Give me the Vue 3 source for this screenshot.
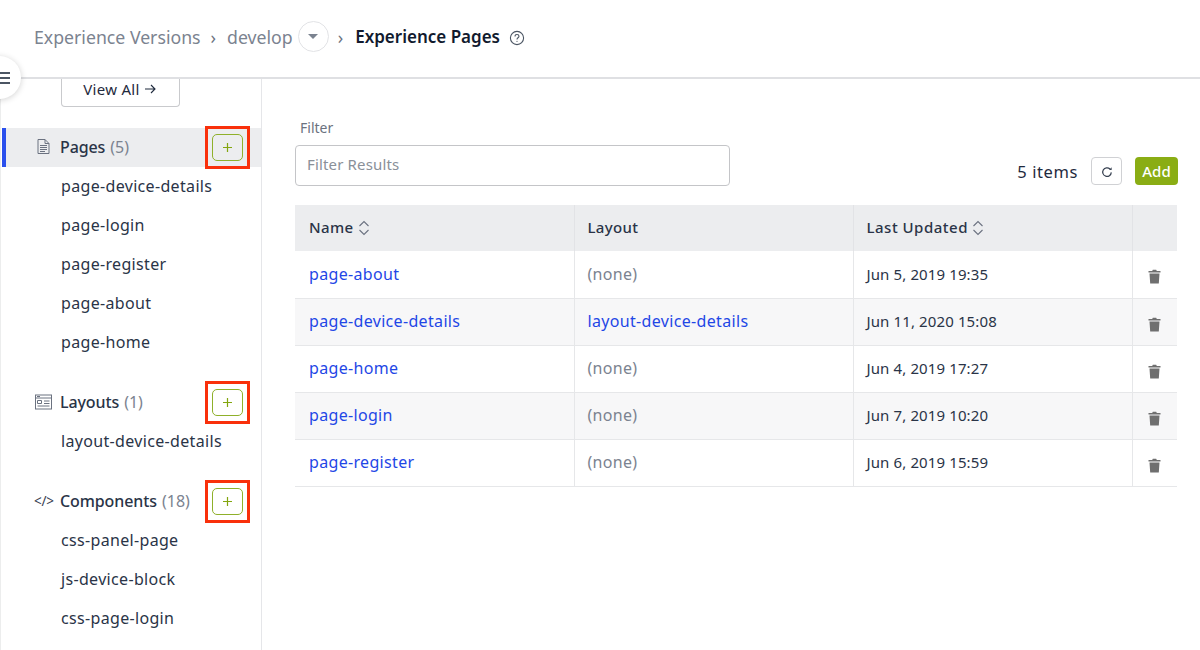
<script setup>
const groups = [
  { name: 'Pages', count: 5, icon: 'page', active: true, items: ['page-device-details', 'page-login', 'page-register', 'page-about', 'page-home'] },
  { name: 'Layouts', count: 1, icon: 'layout', items: ['layout-device-details'] },
  { name: 'Components', count: 18, icon: 'code', items: ['css-panel-page', 'js-device-block', 'css-page-login'] },
]
const rows = [
  { name: 'page-about', layout: '(none)', updated: 'Jun 5, 2019 19:35' },
  { name: 'page-device-details', layout: 'layout-device-details', updated: 'Jun 11, 2020 15:08' },
  { name: 'page-home', layout: '(none)', updated: 'Jun 4, 2019 17:27' },
  { name: 'page-login', layout: '(none)', updated: 'Jun 7, 2019 10:20' },
  { name: 'page-register', layout: '(none)', updated: 'Jun 6, 2019 15:59' },
]
</script>

<template>
  <div class="page">
    <header class="topbar">
      <span class="crumb">Experience Versions</span>
      <span class="sep">›</span>
      <span class="crumb">develop</span>
      <span class="caret-btn"><i class="caret"></i></span>
      <span class="sep dark">›</span>
      <strong class="current">Experience Pages</strong>
      <svg class="help" width="16" height="16" viewBox="0 0 16 16" fill="none" stroke="#4b5563" stroke-width="1.1">
        <circle cx="8" cy="8" r="6.6" />
        <path d="M6 6.4c0-1.2.9-1.9 2-1.9s2 .7 2 1.800c0 1.500-2 1.500-2 3.100" />
        <circle cx="8" cy="11.300" r=".6" fill="#4b5563" stroke="none" />
      </svg>
    </header>

    <button class="menu-btn" aria-label="menu">
      <i></i><i></i><i></i>
    </button>

    <div class="body">
      <aside class="sidebar">
        <button class="view-all">
          View All
          <svg width="11" height="10" viewBox="0 0 11 10" fill="none" stroke="#1f2a3d" stroke-width="1.100"><path d="M0 5h10M6 1l4 4-4 4" /></svg>
        </button>
        <section v-for="g in groups" :key="g.name" class="group">
          <div class="group-head" :class="{ active: g.active }">
            <span class="group-icon">
              <svg v-if="g.icon === 'page'" class="page-icon" width="13" height="15" viewBox="0 0 13 15" fill="none" stroke="#6b7280" stroke-width="1">
                <path d="M1 .5h7l4 4v10H1z" />
                <path d="M8 .5v4h4M3 6.500h7M3 8.500h7M3 10.500h7M3 12.500h5" />
              </svg>
              <svg v-else-if="g.icon === 'layout'" width="17" height="16" viewBox="0 0 17 16" fill="none" stroke="#6b7280" stroke-width="1">
                <rect x=".5" y="1" width="16" height="14" />
                <path d="M.5 4h16M2 2.500h3M2.500 6.500h4v3h-4zM9 7h5.500M9 9.500h5.500M2.500 12h12" />
              </svg>
              <span v-else class="code-icon">&lt;/&gt;</span>
            </span>
            <span class="group-name">{{ g.name }}</span>
            <span class="group-count">({{ g.count }})</span>
            <span class="add-mark">
              <span class="add-small">
                <svg width="9" height="9" viewBox="0 0 9 9" stroke="#83a60f" stroke-width="1.200"><path d="M4.500 0v9M0 4.500h9" /></svg>
              </span>
            </span>
          </div>
          <a v-for="item in g.items" :key="item" class="side-item">{{ item }}</a>
        </section>
      </aside>

      <main class="content">
        <div class="toolbar">
          <label class="filter">
            <span class="filter-label">Filter</span>
            <input class="filter-input" placeholder="Filter Results" />
          </label>
          <div class="toolbar-right">
            <span class="items">5 items</span>
            <button class="refresh" aria-label="refresh">
              <svg width="12" height="12" viewBox="0 0 12 12" fill="none" stroke="#374151" stroke-width="1.200">
                <path d="M10.300 6.400a4.300 4.300 0 1 1-1.300-3.400" />
                <path d="M10.600 1.300v2.600H8" fill="#374151" stroke="none" />
              </svg>
            </button>
            <button class="add">Add</button>
          </div>
        </div>

        <table class="table">
          <thead>
            <tr>
              <th class="c1">Name <svg class="sort" width="12" height="18" viewBox="0 0 12 18" fill="none" stroke="#6b7280" stroke-width="1.100"><path d="M1.500 7l4.500-4.500L10.500 7M1.500 11l4.500 4.500 4.500-4.500" /></svg></th>
              <th class="c2">Layout</th>
              <th class="c3">Last Updated <svg class="sort" width="12" height="18" viewBox="0 0 12 18" fill="none" stroke="#6b7280" stroke-width="1.100"><path d="M1.500 7l4.500-4.500L10.500 7M1.500 11l4.500 4.500 4.500-4.500" /></svg></th>
              <th class="c4"></th>
            </tr>
          </thead>
          <tbody>
            <tr v-for="r in rows" :key="r.name">
              <td><a class="link">{{ r.name }}</a></td>
              <td>
                <span v-if="r.layout === '(none)'" class="none">(none)</span>
                <a v-else class="link">{{ r.layout }}</a>
              </td>
              <td class="date">{{ r.updated }}</td>
              <td class="trash-cell">
                <svg width="13" height="15" viewBox="0 0 13 15" fill="#6f6f6f">
                  <path d="M.5 2h3.700l.6-1.200h3.400L8.800 2h3.700v1.500H.5zM1.500 4.500h10l-.7 10H2.200z" />
                </svg>
              </td>
            </tr>
          </tbody>
        </table>
      </main>
    </div>
  </div>
</template>

<style>
html, body { margin: 0; background: #fff; overflow: hidden; }
</style>

<style scoped>
.page {
  position: relative;
  width: 1200px;
  height: 650px;
  overflow: hidden;
  font-family: "Noto Sans", "Open Sans", sans-serif;
  color: #1f2a3d;
  font-size: 16px;
}
.topbar {
  height: 79px;
  box-sizing: border-box;
  border-bottom: 2px solid #dfe0e3;
  display: flex;
  align-items: center;
  padding: 0 0 4px 34px;
  font-size: 17.700px;
}
.crumb { color: #7b8390; }
.sep { color: #6b7280; margin: 0 11px 0 10px; }
.sep.dark { margin: 0 12px 0 9px; }
.caret-btn {
  width: 31px;
  height: 31px;
  box-sizing: border-box;
  border: 1px solid #e2e3e6;
  border-radius: 50%;
  margin-left: 5px;
  display: flex;
  align-items: center;
  justify-content: center;
}
.caret {
  width: 0;
  height: 0;
  border-left: 5px solid transparent;
  border-right: 5px solid transparent;
  border-top: 5px solid #7b8390;
}
.current { color: #111a2e; font-weight: 600; font-size: 17px; }
.help { margin-left: 9px; margin-top: 2px; }
.menu-btn {
  position: absolute;
  left: -22px;
  top: 56px;
  width: 43px;
  height: 43px;
  border: 0;
  border-radius: 50%;
  background: #fff;
  box-shadow: 0 1px 6px rgba(0, 0, 0, .18);
  display: flex;
  flex-direction: column;
  align-items: flex-end;
  justify-content: center;
  gap: 3px;
  padding: 0 11px 0 0;
  z-index: 2;
}
.menu-btn i { display: block; width: 11px; height: 2px; background: #4b5563; }
.body { display: flex; height: 571px; }
.sidebar {
  width: 262px;
  box-sizing: border-box;
  border-right: 1px solid #e5e6e9;
  border-left: 1px solid #eceded;
  flex: none;
  overflow: hidden;
}
.view-all {
  display: flex;
  align-items: center;
  justify-content: center;
  gap: 5px;
  margin-left: 60px;
  width: 119px;
  height: 28px;
  box-sizing: border-box;
  border: 1px solid #c9cacd;
  border-top: 0;
  border-radius: 0 0 4px 4px;
  background: #fff;
  font: 15px "Noto Sans", sans-serif;
  letter-spacing: .3px;
  color: #1f2a3d;
  padding: 0 2px 7px 0;
}
.group { margin-bottom: 21px; }
.group:first-of-type { margin-top: 21px; }
.group-head {
  position: relative;
  height: 39px;
  display: flex;
  align-items: center;
  padding-left: 29px;
  margin-left: 1px;
  gap: 5px;
  border-left: 4px solid transparent;
}
.group-head.active { background: #ecedef; border-left-color: #2b50ed; }
.group-icon { width: 20px; display: flex; justify-content: flex-start; flex: none; margin-bottom: 2px; }
.page-icon { margin-left: 2px; }
.group-name { font-weight: 500; color: #2a3447; letter-spacing: -.1px; margin-bottom: 2px; }
.group-count { color: #7b8390; margin-bottom: 2px; }
.code-icon { font-size: 13.500px; color: #374151; margin-left: -1px; letter-spacing: -.3px; }
.add-mark {
  position: absolute;
  left: 199px;
  top: -2px;
  width: 45px;
  height: 43px;
  box-sizing: border-box;
  border: 3px solid #f9300b;
  display: flex;
  align-items: center;
  justify-content: center;
}
.add-small {
  width: 31px;
  height: 27px;
  box-sizing: border-box;
  border: 1px solid #8fb02a;
  border-radius: 5px;
  margin-right: 1px;
  display: flex;
  align-items: center;
  justify-content: center;
}
.side-item {
  display: block;
  height: 39px;
  line-height: 39px;
  padding-left: 60px;
  font-size: 16px;
  letter-spacing: .33px;
  color: #2a3447;
}
.content { flex: 1; padding: 40px 22px 0 33px; min-width: 0; }
.toolbar { display: flex; justify-content: space-between; align-items: flex-end; }
.filter { display: block; }
.filter-label { display: block; font-size: 14px; color: #6b7280; padding-left: 5px; margin-bottom: 8px; line-height: 18px; }
.filter-input {
  display: block;
  width: 435px;
  height: 41px;
  box-sizing: border-box;
  border: 1px solid #c4c5c8;
  border-radius: 4px;
  padding: 0 11px 4px;
  font: 15px "Noto Sans", sans-serif;
  letter-spacing: .15px;
}
.filter-input::placeholder { color: #8a9099; opacity: 1; }
.toolbar-right { display: flex; align-items: center; margin-bottom: 1px; height: 28px; }
.items { font-size: 16.500px; letter-spacing: .6px; color: #1f2a3d; margin-right: 13px; }
.refresh {
  width: 31px;
  height: 28px;
  box-sizing: border-box;
  border: 1px solid #d0d1d4;
  border-radius: 4px;
  background: #fff;
  display: flex;
  align-items: center;
  justify-content: center;
  padding: 2px 0 0;
  margin-right: 13px;
}
.add {
  width: 43px;
  height: 28px;
  border: 0;
  border-radius: 4px;
  background: #8aad14;
  color: #fff;
  font: 500 15px "Noto Sans", sans-serif;
  padding: 0;
}
.table {
  width: 882px;
  margin-top: 19px;
  border-collapse: collapse;
  table-layout: fixed;
  font-size: 15px;
}
th {
  height: 46px;
  box-sizing: border-box;
  background: #ecedef;
  text-align: left;
  padding: 0 14px 2px;
  font-weight: 500;
  color: #2a3447;
  border-right: 1px solid #e2e3e6;
  font-size: 15px;
  letter-spacing: .35px;
}
th:last-child { border-right: 0; }
.c1, .c2, .c3 { width: 279px; }
.c3 { letter-spacing: .5px; }
.c4 { width: 45px; }
.sort { vertical-align: -4px; }
td {
  height: 47px;
  box-sizing: border-box;
  padding: 0 14px 2px;
  border-right: 1px solid #e6e7e9;
  border-bottom: 1px solid #e6e7e9;
  color: #2a3447;
}
th + th, td + td { padding-left: 13px; }
tbody tr:first-child td:not(.trash-cell) { padding-bottom: 0; }
td:last-child { border-right: 0; }
tbody tr:nth-child(even) td { background: #f7f7f8; }
.date { letter-spacing: .12px; }
.link { color: #1f47e6; font-size: 16px; letter-spacing: .33px; }
.none { color: #7b8390; font-size: 16px; letter-spacing: .3px; }
td.trash-cell { text-align: center; padding: 8px 0 0; }
</style>
